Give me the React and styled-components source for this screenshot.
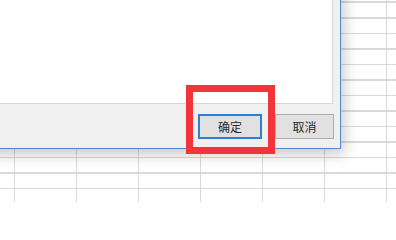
import React from 'react';
import styled, { createGlobalStyle } from 'styled-components';

const GlobalStyle = createGlobalStyle`
  html, body {
    margin: 0;
    padding: 0;
    width: 396px;
    height: 202px;
    overflow: hidden;
  }
  body {
    font-family: "Noto Sans CJK SC", "Liberation Sans", sans-serif;
  }
`

const Sheet = styled.div`
  position: relative;
  width: 396px;
  height: 202px;
  overflow: hidden;
  background-color: #ffffff;
  background-image:
    repeating-linear-gradient(to right, #d9d9d9 0 1px, transparent 1px 62px),
    repeating-linear-gradient(to bottom, #dadada 0 1px, transparent 1px 15.5px);
  background-position: 14px 0, 0 2px;
`

const Dialog = styled.div`
  position: absolute;
  left: -20px;
  top: -30px;
  width: 359px;
  display: flex;
  flex-direction: column;
  background: #f0f0f0;
  border: 1px solid #4f8ccc;
  box-shadow: 3px 5px 14px rgba(0, 0, 0, 0.22);
`

const Content = styled.div`
  height: 132px;
  margin: 0 7px 0 0;
  background: #ffffff;
  border-right: 1px solid #d6d6d6;
  border-bottom: 1px solid #d6d6d6;
`

const Footer = styled.div`
  display: flex;
  justify-content: flex-end;
  gap: 13px;
  padding: 10px 6px 9px 0;
`

const Button = styled.button`
  position: relative;
  width: ${p => p.$width}px;
  height: 25px;
  padding: 0;
  background: #e1e1e1;
  border: ${p => (p.$primary ? '2px solid #2e7fd6' : '1px solid #adadad')};
  color: #2a2a2a;
  font-family: "Noto Sans CJK SC", "Liberation Sans", sans-serif;
  font-size: 12px;
  line-height: 1;
`

const Highlight = styled.span`
  position: absolute;
  left: -14px;
  right: -15px;
  top: -31px;
  bottom: -17px;
  border: 7px solid #f1353a;
  pointer-events: none;
`

export default function App() {
  return (
    <Sheet>
      <GlobalStyle />
      <Dialog>
        <Content />
        <Footer>
          <Button $primary $width={64}>
            确定
            <Highlight />
          </Button>
          <Button $width={59}>取消</Button>
        </Footer>
      </Dialog>
    </Sheet>
  );
}
